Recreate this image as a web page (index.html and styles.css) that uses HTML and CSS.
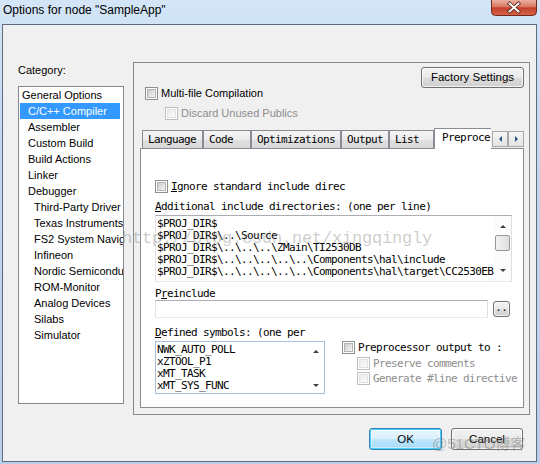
FILE: index.html
```html
<!DOCTYPE html>
<html>
<head>
<meta charset="utf-8">
<link rel="stylesheet" href="styles.css">
</head>
<body>
<div class="window">
  <div class="titlebar">
    <span class="title">Options for node "SampleApp"</span>
    <div class="close">
      <svg width="46" height="16" viewBox="0 0 46 16">
        <defs>
          <linearGradient id="cg" x1="0" y1="0" x2="0" y2="1">
            <stop offset="0" stop-color="#eab0a2"/>
            <stop offset="0.45" stop-color="#d7755f"/>
            <stop offset="0.5" stop-color="#c2402b"/>
            <stop offset="1" stop-color="#d8664a"/>
          </linearGradient>
        </defs>
        <path d="M0.5 0 V11.5 Q0.5 15.5 4.5 15.5 H41.5 Q45.5 15.5 45.5 11.5 V0" fill="url(#cg)" stroke="#6f2a20"/>
        <path d="M18.5 3.5 L27.5 11.5 M27.5 3.5 L18.5 11.5" stroke="#5a2a24" stroke-width="3.6" stroke-linecap="square"/>
        <path d="M18.5 3.5 L27.5 11.5 M27.5 3.5 L18.5 11.5" stroke="#ffffff" stroke-width="1.9" stroke-linecap="square"/>
      </svg>
    </div>
  </div>
  <div class="client">
    <div class="main">
      <div class="leftcol">
        <div class="cat-label">Category:</div>
        <div class="listbox">
          <div class="item l0">General Options</div>
          <div class="item l1 sel">C/C++ Compiler</div>
          <div class="item l1">Assembler</div>
          <div class="item l1">Custom Build</div>
          <div class="item l1">Build Actions</div>
          <div class="item l1">Linker</div>
          <div class="item l1">Debugger</div>
          <div class="item l2">Third-Party Driver</div>
          <div class="item l2">Texas Instruments</div>
          <div class="item l2">FS2 System Navigator</div>
          <div class="item l2">Infineon</div>
          <div class="item l2">Nordic Semiconductor</div>
          <div class="item l2">ROM-Monitor</div>
          <div class="item l2">Analog Devices</div>
          <div class="item l2">Silabs</div>
          <div class="item l2">Simulator</div>
        </div>
      </div>
      <div class="panel">
        <div class="toprow"><div class="btn factory">Factory Settings</div></div>
        <div class="chkrow multi"><span class="cb"></span><span>Multi-file Compilation</span></div>
        <div class="chkrow discard dis"><span class="cb off"></span><span>Discard Unused Publics</span></div>
        <div class="tabs">
          <div class="tab t-lang">Language</div>
          <div class="tab t-code">Code</div>
          <div class="tab t-opt">Optimizations</div>
          <div class="tab t-out">Output</div>
          <div class="tab t-list">List</div>
          <div class="tab active t-pre">Preprocessor</div>
          <div class="tabscroll">
            <div class="sbtn"><span class="tri-l"></span></div>
            <div class="sbtn"><span class="tri-r"></span></div>
          </div>
        </div>
        <div class="page">
          <div class="mrow ignore"><span class="cb"></span><span><u>I</u>gnore standard include direc</span></div>
          <div class="mlabel add-label"><u>A</u>dditional include directories: (one per line)</div>
          <div class="edit multi-edit inc">
            <div class="lines">
              <div>$PROJ_DIR$</div>
              <div>$PROJ_DIR$\..\Source</div>
              <div>$PROJ_DIR$\..\..\..\ZMain\TI2530DB</div>
              <div>$PROJ_DIR$\..\..\..\..\..\Components\hal\include</div>
              <div>$PROJ_DIR$\..\..\..\..\..\Components\hal\target\CC2530EB</div>
            </div>
            <div class="vscroll">
              <span class="tri-u"></span>
              <span class="thumb"></span>
              <span class="tri-d"></span>
            </div>
          </div>
          <div class="mlabel pre-label">P<u>r</u>einclude</div>
          <div class="prerow">
            <div class="edit single"></div>
            <div class="btn dots">..</div>
          </div>
          <div class="mlabel def-label"><u>D</u>efined symbols: (one per</div>
          <div class="bottomrow">
            <div class="edit multi-edit def">
              <div class="lines">
                <div>NWK_AUTO_POLL</div>
                <div>xZTOOL_P1</div>
                <div>xMT_TASK</div>
                <div>xMT_SYS_FUNC</div>
              </div>
              <div class="vscroll small">
                <span class="tri-u"></span>
                <span class="tri-d"></span>
              </div>
            </div>
            <div class="ppgroup">
              <div class="mrow pp"><span class="cb"></span><span>Preprocessor output to :</span></div>
              <div class="mrow sub dis preserve"><span class="cb off"></span><span>Preserve comments</span></div>
              <div class="mrow sub dis gen"><span class="cb off"></span><span>Generate #line directive</span></div>
            </div>
          </div>
        </div>
      </div>
    </div>
    <div class="buttons">
      <div class="btn ok">OK</div>
      <div class="btn cancel">Cancel</div>
    </div>
  </div>
  <div class="wm wm1">http://blog.csdn.net/xingqingly</div>
  <div class="wm wm2">@51CTO博客</div>
</div>
</body>
</html>
```
FILE: styles.css
```css
* { box-sizing: border-box; margin: 0; padding: 0; }
body {
  margin: 0;
  width: 540px;
  height: 464px;
  overflow: hidden;
  font-family: "Liberation Sans", Arial, sans-serif;
  font-size: 11px;
  color: #000;
  background: #c2d8ef;
}
.window {
  position: relative;
  width: 540px;
  height: 464px;
  padding: 0 3px 2px 2px;
  display: flex;
  flex-direction: column;
  background: linear-gradient(180deg, #d3e5f7 0%, #c1d8f0 30%, #b7cfe9 100%);
}
.titlebar {
  height: 24px;
  flex: none;
  display: flex;
  justify-content: space-between;
  align-items: flex-start;
}
.title {
  padding: 3px 0 0 1px;
  font-size: 12px;
  line-height: 15px;
  color: #000;
}
.close { width: 46px; height: 16px; }
.close svg { display: block; }

.client {
  flex: 1;
  border: 1px solid #5d6b7b;
  background: #f0f0f0;
  display: flex;
  flex-direction: column;
}
.main {
  display: flex;
  padding: 37px 0 0 15px;
}
.leftcol {
  width: 106px;
  padding-top: 1px;
  display: flex;
  flex-direction: column;
}
.cat-label { line-height: 14px; height: 14px; }
.listbox {
  margin-top: 9px;
  height: 318px;
  border: 1px solid #828790;
  background: #fff;
  overflow: hidden;
}
.item {
  height: 16px;
  line-height: 16px;
  white-space: nowrap;
  overflow: hidden;
}
.l0 { padding-left: 3px; }
.l1 { padding-left: 9px; }
.l2 { padding-left: 15px; }
.item.sel {
  background: #3399ff;
  color: #fff;
  margin: 0 3px 0 1px;
  padding-left: 8px;
}

.panel {
  margin-left: 9px;
  width: 397px;
  height: 353px;
  border: 1px solid #888;
  display: flex;
  flex-direction: column;
}
.toprow {
  display: flex;
  justify-content: flex-end;
  padding: 4px 5px 0 0;
}
.btn {
  border: 1px solid #707070;
  border-radius: 3px;
  background: linear-gradient(180deg, #f2f2f2 0%, #ebebeb 48%, #dddddd 52%, #cfcfcf 100%);
  box-shadow: inset 0 0 0 1px rgba(255,255,255,0.75);
  text-align: center;
  white-space: nowrap;
}
.factory { width: 103px; height: 21px; line-height: 19px; font-size: 11.5px; }

.cb {
  flex: none;
  position: relative;
  width: 13px;
  height: 13px;
  border: 1px solid #8e8f8f;
  background: #fff;
  margin-right: 3px;
}
.cb::after {
  content: "";
  position: absolute;
  left: 1px; top: 1px; right: 1px; bottom: 1px;
  border: 1px solid #b4b4b4;
  background: linear-gradient(135deg, #c9c9c9 0%, #e6e6e6 60%, #f6f6f6 100%);
}
.cb.off { border-color: #bdbdbd; }
.cb.off::after {
  border-color: #e2e2e2;
  background: linear-gradient(135deg, #ececec, #fafafa);
}
.chkrow {
  display: flex;
  align-items: center;
  height: 13px;
  line-height: 13px;
}
.multi { margin: -1px 0 0 11px; }
.discard { margin: 7px 0 0 31px; }
.dis { color: #8d8d8d; }

.tabs {
  position: relative;
  z-index: 2;
  display: flex;
  align-items: flex-end;
  height: 20px;
  margin: 8px 0 0 8px;
  font-family: "DejaVu Sans Mono", monospace;
  font-size: 11px;
  letter-spacing: -0.62px;
}
.tab {
  flex: none;
  height: 18px;
  border: 1px solid #898c95;
  border-bottom: none;
  background: linear-gradient(180deg, #f4f4f4 0%, #ececec 50%, #e0e0e0 52%, #d9d9d9 100%);
  padding: 1px 0 0 5px;
  line-height: 15px;
  overflow: hidden;
  white-space: nowrap;
}
.t-lang { width: 61px; }
.t-code { width: 48px; }
.t-opt { width: 90px; }
.t-out { width: 48px; }
.t-list { width: 45px; }
.tab.active {
  width: 57px;
  height: 21px;
  margin-bottom: -1px;
  background: #fff;
  padding: 1px 0 0 7px;
  line-height: 16px;
  border-right: none;
}
.tabscroll {
  align-self: flex-start;
  margin: 3px 0 0 1px;
  display: flex;
  height: 16px;
}
.sbtn {
  width: 16px;
  height: 16px;
  border: 1px solid #a8a8a8;
  background: linear-gradient(180deg, #f7f7f7, #e3e3e3);
  display: flex;
  align-items: center;
  justify-content: center;
}
.tri-l, .tri-r, .tri-u, .tri-d { width: 0; height: 0; display: block; }
.tri-l { border-top: 3px solid transparent; border-bottom: 3px solid transparent; border-right: 3px solid #2d4f8a; }
.tri-r { border-top: 3px solid transparent; border-bottom: 3px solid transparent; border-left: 3px solid #2d4f8a; }
.tri-u { border-left: 3px solid transparent; border-right: 3px solid transparent; border-bottom: 3px solid #404040; }
.tri-d { border-left: 3px solid transparent; border-right: 3px solid transparent; border-top: 3px solid #404040; }

.page {
  position: relative;
  z-index: 1;
  margin-left: 6px;
  width: 384px;
  height: 260px;
  border: 1px solid #898c95;
  background: #fff;
  padding: 31px 0 0 14px;
  font-family: "DejaVu Sans Mono", monospace;
  font-size: 11px;
  letter-spacing: -0.62px;
}
.mrow {
  display: flex;
  align-items: center;
  height: 13px;
  line-height: 13px;
  white-space: nowrap;
}
.mlabel { height: 12px; line-height: 12px; white-space: nowrap; }
.add-label { margin-top: 8px; }
.edit {
  border: 1px solid #abadb3;
  border-color: #abadb3 #dbdfe6 #e3e9ef #e2e3ea;
  background: #fff;
}
.multi-edit {
  display: flex;
  overflow: hidden;
}
.lines {
  flex: 1;
  overflow: hidden;
  white-space: nowrap;
  padding: 2px 0 0 1px;
  line-height: 12px;
}
.inc { margin-top: 2px; width: 357px; height: 67px; }
.vscroll {
  width: 17px;
  flex: none;
  display: flex;
  flex-direction: column;
  align-items: center;
  justify-content: space-between;
  padding: 9px 0 9px 0;
  background: #fcfcfc;
}
.thumb {
  width: 15px;
  height: 16px;
  border: 1px solid #979797;
  border-radius: 2px;
  background: linear-gradient(90deg, #f2f2f2, #dedede);
  margin-top: -3px;
  margin-bottom: 8px;
}
.pre-label { margin-top: 6px; }
.prerow { display: flex; align-items: flex-start; }
.single { width: 333px; height: 18px; }
.dots {
  margin: 1px 0 0 5px;
  width: 17px;
  height: 16px;
  line-height: 12px;
  font-size: 10px;
  letter-spacing: 0;
}
.def-label { margin-top: 9px; }
.bottomrow { display: flex; margin-top: 2px; }
.def {
  width: 170px;
  height: 53px;
  border-color: #a7c1dc;
}
.def .lines { padding-top: 2px; }
.vscroll.small { padding: 8px 0 6px 0; background: #fff; }
.ppgroup { margin-left: 17px; }
.sub { margin-left: 15px; }
.preserve { margin-top: 3px; }
.gen { margin-top: 2px; }

.buttons {
  display: flex;
  justify-content: flex-end;
  gap: 9px;
  padding-right: 13px;
  margin-top: 13px;
}
.buttons .btn { height: 22px; line-height: 20px; font-size: 11.5px; }
.ok {
  width: 73px;
  border-color: #3c7fb1;
  box-shadow: inset 0 0 0 1px #48d3fb, inset 0 0 0 2px rgba(255,255,255,0.4);
  background: linear-gradient(180deg, #eaf6fd 0%, #d9f0fc 48%, #bee6fd 52%, #a7d9f5 100%);
}
.cancel { width: 72px; }

.wm {
  position: absolute;
  z-index: 5;
  pointer-events: none;
  white-space: nowrap;
}
.wm1 {
  left: 122px;
  top: 229px;
  font-family: "Liberation Mono", monospace;
  font-size: 17px;
  letter-spacing: -0.2px;
  color: rgba(120, 120, 120, 0.38);
}
.wm2 {
  left: 432px;
  top: 432px;
  font-size: 15px;
  font-family: "Liberation Sans", "Noto Sans CJK SC", sans-serif;
  color: rgba(130, 130, 130, 0.5);
}
```
